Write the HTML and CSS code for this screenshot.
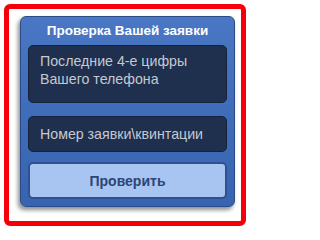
FILE: index.html
```html
<!DOCTYPE html>
<html>
<head>
<meta charset="utf-8">
<link rel="stylesheet" href="styles.css">
</head>
<body>
<div class="frame">
  <div class="panel">
    <div class="title">Проверка Вашей заявки</div>
    <div class="field field-tall">Последние 4-е цифры<br>Вашего телефона</div>
    <div class="field field-short">Номер заявки\квинтации</div>
    <div class="btn">Проверить</div>
  </div>
</div>
</body>
</html>
```
FILE: styles.css
```css
html, body {
  margin: 0;
  padding: 0;
  background: #ffffff;
}
body {
  width: 250px;
  height: 231px;
  overflow: hidden;
  font-family: "Liberation Sans", Arial, sans-serif;
}
.frame {
  box-sizing: border-box;
  margin: 4px 0 0 4px;
  width: 242px;
  height: 222px;
  border: 5px solid #f5000a;
  border-radius: 6px;
  padding: 7px 6px 0 11px;
}
.panel {
  box-sizing: border-box;
  width: 215px;
  height: 191px;
  padding: 0 7px;
  border-radius: 6px;
  border: 1px solid #2b4c88;
  background: linear-gradient(#4977c3, #3763b0);
  box-shadow: -2px 3px 4px rgba(0,0,0,0.45);
  display: flex;
  flex-direction: column;
}
.title {
  height: 28px;
  line-height: 28px;
  text-align: center;
  color: #ffffff;
  font-weight: bold;
  font-size: 13.5px;
}
.field {
  box-sizing: border-box;
  background: #1f2f4e;
  border: 1px solid #16223a;
  border-radius: 5px;
  color: #c6c9d0;
  font-size: 14.2px;
  line-height: 18px;
  padding-left: 11px;
}
.field-tall {
  height: 58px;
  padding-top: 6px;
}
.field-short {
  margin-top: 13px;
  height: 36px;
  display: flex;
  align-items: center;
}
.btn {
  box-sizing: border-box;
  margin-top: 10px;
  height: 37px;
  background: #a8c4f1;
  border: 2px solid #2e528f;
  border-radius: 5px;
  color: #2b4575;
  font-weight: bold;
  font-size: 14px;
  display: flex;
  align-items: center;
  justify-content: center;
}
```
